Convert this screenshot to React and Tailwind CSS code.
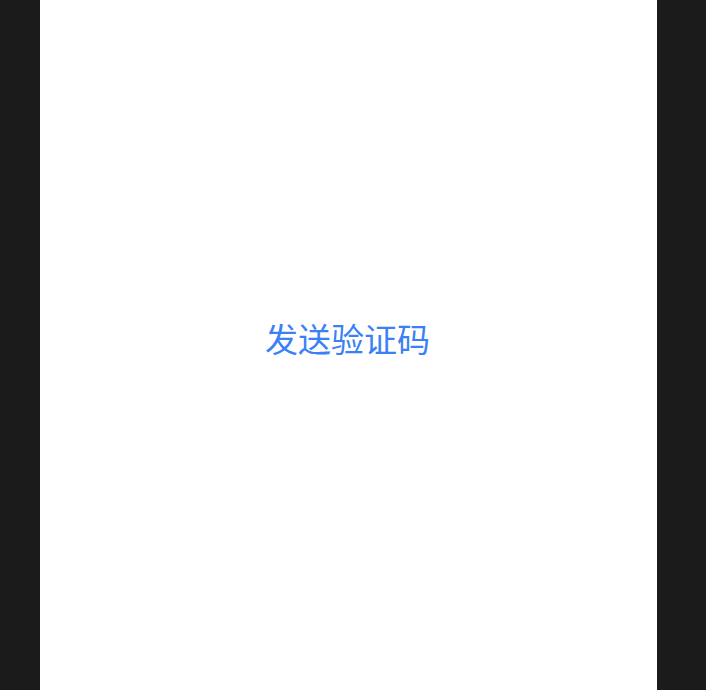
import React from "react";

export default function App() {
  return (
    <div className="flex h-[690px] w-full bg-[#1b1b1b] pl-[40px] pr-[49px]">
      <div className="flex flex-1 items-center justify-center bg-white pb-[13px] pr-[2px]">
        <button
          type="button"
          className="text-[33px] leading-none text-[#3b80f5] font-['Noto_Sans_CJK_SC',sans-serif]"
        >
          发送验证码
        </button>
      </div>
    </div>
  );
}
